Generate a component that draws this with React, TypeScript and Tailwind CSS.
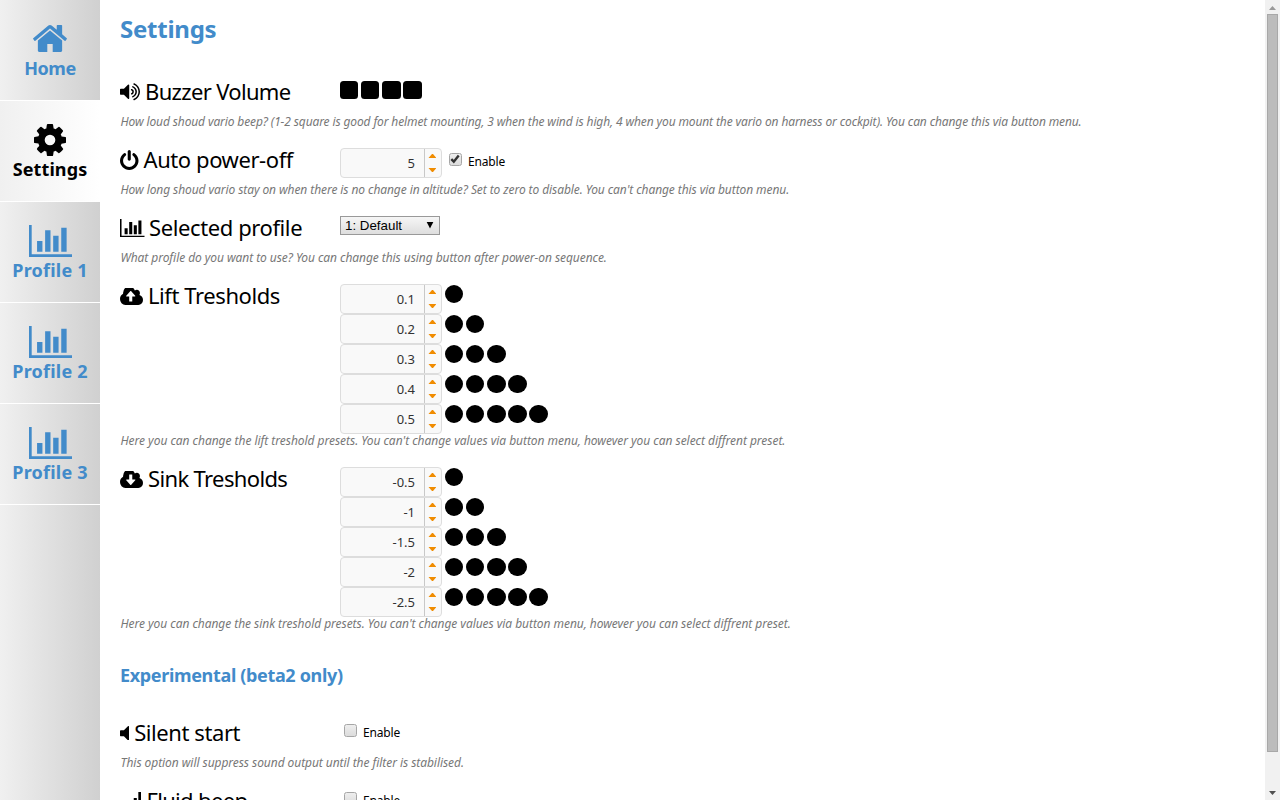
import type { ReactNode } from "react";

const PATHS = {
  home: "M1472 992v480q0 26-19 45t-45 19h-384v-384h-256v384h-384q-26 0-45-19t-19-45v-480q0-1 .5-3t.5-3l575-474 575 474q1 2 1 6zm223-69l-62 74q-8 9-21 11h-3q-13 0-21-7l-692-577-692 577q-12 8-24 7-13-2-21-11l-62-74q-8-10-7-23.5t11-21.5l719-599q32-26 76-26t76 26l244 204v-195q0-14 9-23t23-9h192q14 0 23 9t9 23v408l219 182q10 8 11 21.5t-7 23.5z",
  cog: "M1152 896q0-106-75-181t-181-75-181 75-75 181 75 181 181 75 181-75 75-181zm512-109v222q0 12-8 23t-20 13l-185 28q-19 54-39 91 35 50 107 138 10 12 10 25t-9 23q-27 37-99 108t-94 71q-12 0-26-9l-138-108q-44 23-91 38-16 136-29 186-7 28-36 28h-222q-14 0-24.5-8.5t-11.5-21.5l-28-184q-49-16-90-37l-141 107q-10 9-25 9-14 0-25-11-126-114-165-168-7-10-7-23 0-12 8-23 15-21 51-66.5t54-70.5q-27-50-41-99l-183-27q-13-2-21-12.5t-8-23.5v-222q0-12 8-23t19-13l186-28q14-46 39-92-40-57-107-138-10-12-10-24 0-10 9-23 26-36 98.5-107.5t94.5-71.5q13 0 26 10l138 107q44-23 91-38 16-136 29-186 7-28 36-28h222q14 0 24.5 8.5t11.5 21.5l28 184q49 16 90 37l142-107q9-9 24-9 13 0 25 10 129 119 165 170 7 8 7 22 0 12-8 23-15 21-51 66.5t-54 70.5q26 50 41 98l183 28q13 2 21 12.5t8 23.5z",
  chart: "M640 896v512h-256v-512h256zm384-512v1024h-256v-1024h256zm1024 1152v128h-2048v-1536h128v1408h1920zm-640-896v768h-256v-768h256zm384-384v1152h-256v-1152h256z",
  mute: "M832 352v1088q0 26-19 45t-45 19-45-19l-333-333h-262q-26 0-45-19t-19-45v-384q0-26 19-45t45-19h262l333-333q19-19 45-19t45 19 19 45z",
  volume:
    "M832 352v1088q0 26-19 45t-45 19-45-19l-333-333h-262q-26 0-45-19t-19-45v-384q0-26 19-45t45-19h262l333-333q19-19 45-19t45 19 19 45zm384 544q0 76-42.5 141.5t-112.5 93.5q-10 5-25 5-26 0-45-18.5t-19-45.5q0-21 12-35.5t29-25 34-23 29-36 12-56.5-12-56.5-29-36-34-23-29-25-12-35.5q0-27 19-45.5t45-18.5q15 0 25 5 70 27 112.5 93t42.5 142zm256 0q0 153-85 282.5t-225 188.5q-13 5-25 5-27 0-46-19t-19-45q0-39 39-59 56-29 76-44 74-54 115.5-135.5t41.5-173.5-41.5-173.5-115.5-135.5q-20-15-76-44-39-20-39-59 0-26 19-45t45-19q13 0 26 5 140 59 225 188.5t85 282.5zm256 0q0 230-127 422.5t-338 283.5q-13 5-26 5-26 0-45-19t-19-45q0-36 39-59 7-4 22.5-10.5t22.5-10.5q46-25 82-51 123-91 192-227t69-289-69-289-192-227q-36-26-82-51-7-4-22.5-10.5t-22.5-10.5q-39-23-39-59 0-26 19-45t45-19q13 0 26 5 211 91 338 283.5t127 422.5z",
  power: "M1664 896q0 156-61 298t-164 245-245 164-298 61-298-61-245-164-164-245-61-298q0-182 80.5-343t226.5-270q43-32 95.5-25t83.5 50q32 42 24.5 94.5t-49.5 84.5q-98 74-151.5 181t-53.5 228q0 104 40.5 198.5t109.5 163.5 163.5 109.5 198.5 40.5 198.5-40.5 163.5-109.5 109.5-163.5 40.5-198.5q0-121-53.5-228t-151.5-181q-42-32-49.5-84.5t24.5-94.5q31-43 84-50t95 25q146 109 226.5 270t80.5 343zm-640-768v640q0 52-38 90t-90 38-90-38-38-90v-640q0-52 38-90t90-38 90 38 38 90z",
  up: "M1216 864q0-14-9-23l-352-352q-9-9-23-9t-23 9l-351 351q-10 12-10 24 0 14 9 23t23 9h224v352q0 13 9.5 22.5t22.5 9.5h192q13 0 22.5-9.5t9.5-22.5v-352h224q13 0 22.5-9.5t9.5-22.5zm640 288q0 159-112.5 271.5t-271.5 112.5h-1088q-185 0-316.5-131.5t-131.5-316.5q0-130 70-240t188-165q-2-30-2-43 0-212 150-362t362-150q156 0 285.5 87t188.5 231q71-62 166-62 106 0 181 75t75 181q0 76-41 138 130 31 213.5 135.5t83.5 238.5z",
  down: "M1216 928q0-14-9-23t-23-9h-224v-352q0-13-9.5-22.5t-22.5-9.5h-192q-13 0-22.5 9.5t-9.5 22.5v352h-224q-13 0-22.5 9.5t-9.5 22.5q0 14 9 23l352 352q9 9 23 9t23-9l351-351q10-12 10-24zm640 224q0 159-112.5 271.5t-271.5 112.5h-1088q-185 0-316.5-131.5t-131.5-316.5q0-130 70-240t188-165q-2-30-2-43 0-212 150-362t362-150q156 0 285.5 87t188.5 231q71-62 166-62 106 0 181 75t75 181q0 76-41 138 130 31 213.5 135.5t83.5 238.5z",
  signal: "M0 1280h256v192h-256zM384 1152h256v320h-256zM768 896h256v576h-256zM1152 512h256v960h-256zM1536 0h256v1472h-256z",
};

function Icon({ name, box, className }: { name: keyof typeof PATHS; box: string; className: string }) {
  return (
    <svg viewBox={box} preserveAspectRatio="none" className={"shrink-0 fill-current " + className}>
      <path d={PATHS[name]} />
    </svg>
  );
}

function NavItem({ label, active, track, children }: { label: string; active?: boolean; track: string; children: ReactNode }) {
  return (
    <a
      className={
        "flex h-[101px] shrink-0 flex-col items-center border-b border-white pt-[20px] " +
        (active ? "bg-linear-to-r from-[#f0f0f0] to-white text-black" : "text-[#428bca]")
      }
    >
      <span className="flex h-[37px] items-center pt-px">{children}</span>
      <span className={"whitespace-nowrap text-[18px] font-bold leading-[22px] " + track}>{label}</span>
    </a>
  );
}

function Row({ icon, title, track, note, noteTrack, children }: { icon: ReactNode; title: string; track: string; note?: string; noteTrack?: string; children: ReactNode }) {
  return (
    <section className="mb-[19px]">
      <div className="flex min-h-[35px] items-start">
        <h3 className="flex h-[24px] w-[220px] shrink-0 items-center whitespace-nowrap text-[22px] leading-[24px]">
          {icon}
          <span className={"mb-[2px] " + track}>{title}</span>
        </h3>
        <div>{children}</div>
      </div>
      {note && (
        <p className={"-mt-px h-[15px] whitespace-nowrap pl-[0.5px] text-[12px] italic leading-[15px] text-[#777] " + noteTrack}>{note}</p>
      )}
    </section>
  );
}

function Spinner({ value }: { value: string }) {
  return (
    <div className="flex h-[30px] w-[102px] shrink-0 rounded-[4px] border border-[#ddd] bg-[#f9f9f9]">
      <span className="flex-1 pr-[9px] text-right text-[13px] leading-[29px] text-[#333]">{value}</span>
      <span className="flex w-[17px] flex-col items-start border-l border-[#c8c8c8] pl-[3px] pt-[5px]">
        <svg viewBox="0 0 8 18" className="h-[18px] w-[8px] fill-[#f08c00]">
          <path d="M0.5 4L4 0H5L8.5 4ZM0.5 14H8.5L5 18H4Z" />
        </svg>
      </span>
    </div>
  );
}

function Checkbox({ checked }: { checked?: boolean }) {
  return (
    <span className="flex size-[12.5px] items-center justify-center rounded-[2.5px] border border-[#a6a6a6] bg-linear-to-b from-[#eee] to-[#dcdcdc]">
      {checked && (
        <svg viewBox="0 0 10 10" className="size-[10px] shrink-0 fill-none stroke-[#333]" strokeWidth="2.4">
          <path d="M1.3 5.2L3.8 7.7L8.7 1.6" />
        </svg>
      )}
    </span>
  );
}

function Enable() {
  return <span className="mt-px text-[12px] leading-[16px] tracking-[-0.15px]">Enable</span>;
}

function Thresholds({ values }: { values: string[] }) {
  return (
    <div className="flex flex-col">
      {values.map((v, i) => (
        <div key={v} className="flex h-[30px]">
          <Spinner value={v} />
          <div className="ml-[3px] mt-[1px] flex gap-[2.7px]">
            {values.slice(0, i + 1).map((k) => (
              <span key={k} className="size-[18.4px] rounded-full bg-black" />
            ))}
          </div>
        </div>
      ))}
    </div>
  );
}

const chart = <Icon name="chart" box="0 128 2048 1536" className="h-[32px] w-[43px]" />;

export default function App() {
  return (
    <div className="flex h-[800px] w-[1280px] overflow-hidden bg-white font-['Noto_Sans',sans-serif] text-black">
      <nav className="flex w-[100px] shrink-0 flex-col bg-linear-to-r from-[#f0f0f0] to-[#d0d0d0]">
        <NavItem label="Home" track="tracking-[-0.5px]">
          <Icon name="home" box="89 253 1614 1283" className="mb-[2px] h-[27px] w-[34px]" />
        </NavItem>
        <NavItem label="Settings" track="tracking-[0.1px]" active>
          <Icon name="cog" box="128 128 1536 1536" className="size-[32px]" />
        </NavItem>
        <NavItem label="Profile 1" track="tracking-[0.22px]">{chart}</NavItem>
        <NavItem label="Profile 2" track="tracking-[0.22px]">{chart}</NavItem>
        <NavItem label="Profile 3" track="tracking-[0.22px]">{chart}</NavItem>
      </nav>

      <main className="h-[800px] min-w-0 flex-1 overflow-hidden pl-[20px]">
        <h1 className="mb-[36px] mt-[14px] h-[30px] text-[24px] font-bold leading-[30px] tracking-[-0.25px] text-[#428bca]">Settings</h1>

        <Row
          icon={<Icon name="volume" box="64 160 1664 1472" className="mr-[5px] h-[17.5px] w-[20px]" />}
          title="Buzzer Volume"
          track="tracking-[-0.66px]"
          note="How loud shoud vario beep? (1-2 square is good for helmet mounting, 3 when the wind is high, 4 when you mount the vario on harness or cockpit). You can change this via button menu."
          noteTrack="tracking-[-0.122px]"
        >
          <div className="mt-[1px] flex gap-[2.7px]">
            {[1, 2, 3, 4].map((n) => (
              <span key={n} className="size-[18.4px] rounded-[3.5px] bg-black" />
            ))}
          </div>
        </Row>

        <Row
          icon={<Icon name="power" box="128 0 1536 1664" className="mr-[5px] h-[20px] w-[18.5px]" />}
          title="Auto power-off"
          track="tracking-[-0.42px]"
          note="How long shoud vario stay on when there is no change in altitude? Set to zero to disable. You can't change this via button menu."
          noteTrack="tracking-[-0.084px]"
        >
          <div className="flex">
            <Spinner value="5" />
            <div className="ml-[7px] mt-[5px] flex gap-[6.5px]">
              <Checkbox checked />
              <Enable />
            </div>
          </div>
        </Row>

        <Row
          icon={<Icon name="chart" box="0 128 2048 1536" className="mr-[4.5px] h-[18.4px] w-[24.5px]" />}
          title="Selected profile"
          track="tracking-[-0.4px]"
          note="What profile do you want to use? You can change this using button after power-on sequence."
          noteTrack="tracking-[-0.065px]"
        >
          <div className="flex h-[19px] w-[100px] items-center justify-between border border-[#999] bg-linear-to-b from-[#f6f6f6] to-[#dedede] pl-[4px] pr-[5px] font-['Liberation_Sans',sans-serif] text-[13.33px] leading-[17px]">
            <span>1: Default</span>
            <svg viewBox="0 0 8 7" className="mb-px h-[7px] w-[8px]">
              <path d="M0.7 0H7.3L4 6.5Z" />
            </svg>
          </div>
        </Row>

        <Row
          icon={<Icon name="up" box="-64 256 1920 1280" className="mr-[5px] h-[17px] w-[23px]" />}
          title="Lift Tresholds"
          track="tracking-[-0.42px]"
          note="Here you can change the lift treshold presets. You can't change values via button menu, however you can select diffrent preset."
          noteTrack="tracking-[-0.036px]"
        >
          <Thresholds values={["0.1", "0.2", "0.3", "0.4", "0.5"]} />
        </Row>

        <Row
          icon={<Icon name="down" box="-64 256 1920 1280" className="mr-[5px] h-[17px] w-[23px]" />}
          title="Sink Tresholds"
          track="tracking-[-0.64px]"
          note="Here you can change the sink treshold presets. You can't change values via button menu, however you can select diffrent preset."
          noteTrack="tracking-[-0.051px]"
        >
          <Thresholds values={["-0.5", "-1", "-1.5", "-2", "-2.5"]} />
        </Row>

        <h2 className="mb-[34px] mt-[32px] h-[24px] text-[18px] font-bold leading-[24px] tracking-[-0.34px] text-[#428bca]">
          Experimental (beta2 only)
        </h2>

        <Row
          icon={<Icon name="mute" box="64 288 768 1216" className="mr-[5px] h-[14.5px] w-[9.2px]" />}
          title="Silent start"
          track="tracking-[-0.42px]"
          note="This option will suppress sound output until the filter is stabilised."
          noteTrack="tracking-[-0.06px]"
        >
          <div className="ml-[4px] mt-[3px] flex gap-[6.5px]">
            <Checkbox />
            <Enable />
          </div>
        </Row>

        <Row
          icon={<Icon name="signal" box="0 0 1792 1472" className="mr-[5px] h-[17.6px] w-[21.4px]" />}
          title="Fluid beep"
          track="tracking-[-0.66px]"
        >
          <div className="ml-[4px] mt-[3px] flex gap-[6.5px]">
            <Checkbox />
            <Enable />
          </div>
        </Row>
      </main>

      <div className="flex h-[800px] w-[15px] shrink-0 flex-col items-center bg-[#f1f1f1]">
        <svg viewBox="0 0 15 14" className="h-[14px] w-[15px] shrink-0">
          <path d="M4 10L7.5 6L11 10Z" fill="#999" />
        </svg>
        <div className="h-[738px] w-[11px] border border-[#a8a8a8] bg-[#bcbcbc]" />
        <svg viewBox="0 0 15 48" className="h-[48px] w-[15px] shrink-0">
          <path d="M4 39L7.5 43L11 39Z" fill="#505050" />
        </svg>
      </div>
    </div>
  );
}
